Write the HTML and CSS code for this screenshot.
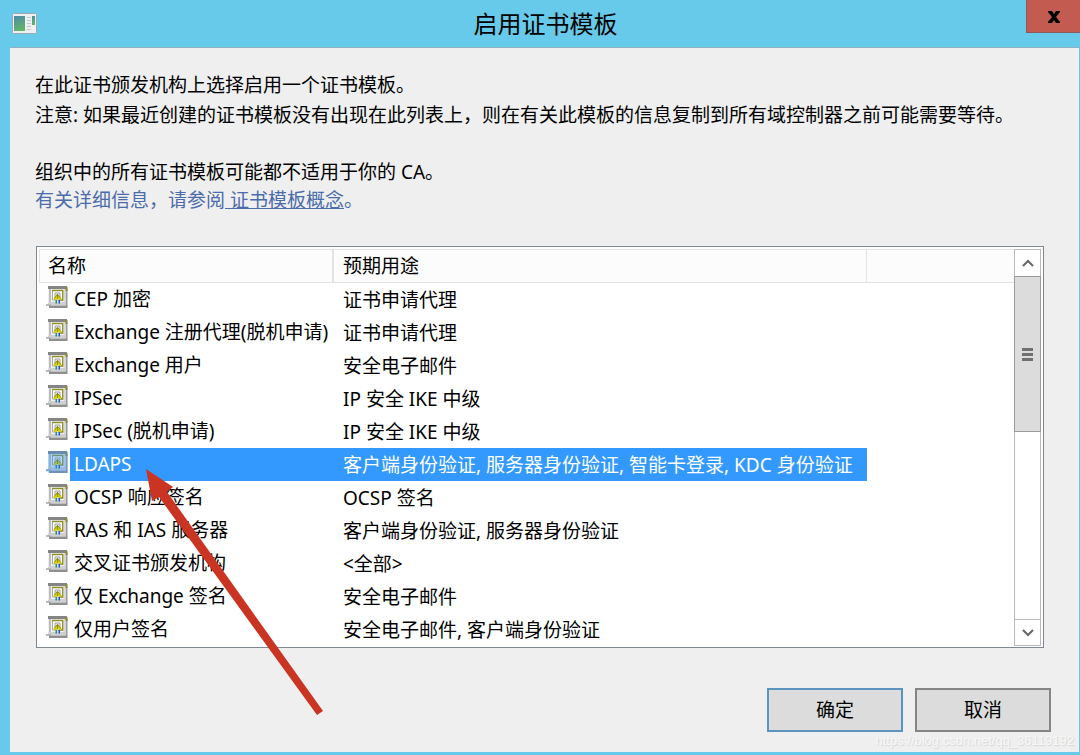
FILE: index.html
```html
<!DOCTYPE html>
<html lang="zh-CN">
<head>
    <meta charset="UTF-8">
    <meta name="viewport" content="width=device-width, initial-scale=1.0">
    <title>启用证书模板</title>
    <link rel="stylesheet" href="styles.css">
</head>
<body>
    <!-- Shared template icon -->
    <svg class="symbols" aria-hidden="true">
        <symbol id="cert" viewBox="0 0 22 22">
            <path d="M2 0h19v20H2z" fill="#f0f0f0"/>
            <path d="M2 0h19v3H2z" fill="#858585"/>
            <path d="M3 3h2v13H3z" fill="#bdbdbd"/>
            <path d="M18 3h2v14h-2z" fill="#d8d8d8"/>
            <path d="M20 3h1.500v17H20z" fill="#9a9a9a"/>
            <path d="M19.500 1h2v4h-2z" fill="#8a8a30"/>
            <path d="M3 16h17v3H1z" fill="#cfcfcf"/>
            <path d="M0 18h5v2H0z" fill="#b8b8b8"/>
            <path d="M3 19.500h18.500V22H3z" fill="#8f8f8f"/>
            <path d="M6.500 4.500h10v9.500h-10z" fill="#fff" stroke="#a9a99a"/>
            <path d="M6 4.500h10.800v9.500H14" fill="none" stroke="#8f8f28" stroke-width="1.300"/>
            <path d="M9 7h5v4H9z" fill="#e9e9e9" stroke="#a0a0a0"/>
            <path d="M11.500 8l3.500 4v2h-2l-1.500-1.500L10 14H8v-2z" fill="#d6d200"/>
            <path d="M11.500 8v5M8 12.500l3.500-4 3.500 4" fill="none" stroke="#808000" stroke-width=".8"/>
            <path d="M9.500 14H11v3.500H9.500z" fill="#1c8c8c"/>
            <path d="M12.500 14H14v3.500h-1.500z" fill="#2848d8"/>
        </symbol>
    </svg>

    <div class="window">
        <header class="titlebar">
            <svg class="app-icon" viewBox="0 0 25 21" aria-hidden="true">
                <defs>
                    <linearGradient id="pane" x1="0" y1="0" x2="0.300" y2="1">
                        <stop offset="0" stop-color="#4d88a8"/>
                        <stop offset="1" stop-color="#62b46c"/>
                    </linearGradient>
                </defs>
                <rect x=".5" y=".5" width="24" height="20" rx="1" fill="#eef0f1" stroke="#9aa9b2"/>
                <rect x="2" y="3" width="11" height="15" fill="url(#pane)"/>
                <path d="M15 4.500h4M15 7.500h4M15 10.500h4M15 13.500h4M15 16.500h4" stroke="#c3c8cb"/>
                <rect x="20" y="3" width="3" height="9" fill="url(#pane)"/>
            </svg>
            <h1>启用证书模板</h1>
            <button type="button" class="close" aria-label="关闭">
                <svg viewBox="0 0 14 12" aria-hidden="true"><path d="M1 0h4l2 3 2-3h4v1L9 6l4 5v1H9L7 9l-2 3H1v-1l4-5-4-5z"/></svg>
            </button>
        </header>

        <main class="dialog">
            <div class="intro">
                <p>在此证书颁发机构上选择启用一个证书模板。</p>
                <p>注意: 如果最近创建的证书模板没有出现在此列表上，则在有关此模板的信息复制到所有域控制器之前可能需要等待。</p>
            </div>
            <div class="more">
                <p>组织中的所有证书模板可能都不适用于你的 CA。</p>
                <p class="hint">有关详细信息，请参阅<a href="#">&nbsp;证书模板概念</a>。</p>
            </div>

            <!-- Template list -->
            <div class="listbox">
                <table class="templates">
                    <colgroup>
                        <col class="col-name">
                        <col class="col-usage">
                        <col>
                    </colgroup>
                    <thead>
                        <tr><th scope="col">名称</th><th scope="col">预期用途</th><td></td></tr>
                    </thead>
                    <tbody>
                        <tr><td><div class="name"><svg class="cert"><use href="#cert"/></svg><span>CEP 加密</span></div></td><td>证书申请代理</td><td></td></tr>
                        <tr><td><div class="name"><svg class="cert"><use href="#cert"/></svg><span>Exchange 注册代理(脱机申请)</span></div></td><td>证书申请代理</td><td></td></tr>
                        <tr><td><div class="name"><svg class="cert"><use href="#cert"/></svg><span>Exchange 用户</span></div></td><td>安全电子邮件</td><td></td></tr>
                        <tr><td><div class="name"><svg class="cert"><use href="#cert"/></svg><span>IPSec</span></div></td><td>IP 安全 IKE 中级</td><td></td></tr>
                        <tr><td><div class="name"><svg class="cert"><use href="#cert"/></svg><span>IPSec (脱机申请)</span></div></td><td>IP 安全 IKE 中级</td><td></td></tr>
                        <tr class="selected"><td><div class="name"><svg class="cert"><use href="#cert"/><path d="M2 0h19.500v22H3l-3-2v-2h2z" fill="#3399ff" fill-opacity=".35"/></svg><span>LDAPS</span></div></td><td>客户端身份验证, 服务器身份验证, 智能卡登录, KDC 身份验证</td><td></td></tr>
                        <tr><td><div class="name"><svg class="cert"><use href="#cert"/></svg><span>OCSP 响应签名</span></div></td><td>OCSP 签名</td><td></td></tr>
                        <tr><td><div class="name"><svg class="cert"><use href="#cert"/></svg><span>RAS 和 IAS 服务器</span></div></td><td>客户端身份验证, 服务器身份验证</td><td></td></tr>
                        <tr><td><div class="name"><svg class="cert"><use href="#cert"/></svg><span>交叉证书颁发机构</span></div></td><td>&lt;全部&gt;</td><td></td></tr>
                        <tr><td><div class="name"><svg class="cert"><use href="#cert"/></svg><span>仅 Exchange 签名</span></div></td><td>安全电子邮件</td><td></td></tr>
                        <tr><td><div class="name"><svg class="cert"><use href="#cert"/></svg><span>仅用户签名</span></div></td><td>安全电子邮件, 客户端身份验证</td><td></td></tr>
                    </tbody>
                </table>
                <div class="scrollbar">
                    <button type="button" aria-label="向上滚动"><svg viewBox="0 0 12 8" aria-hidden="true"><path d="M1 7l5-5 5 5"/></svg></button>
                    <div class="track"><div class="thumb"><i></i><i></i><i></i></div></div>
                    <button type="button" aria-label="向下滚动"><svg viewBox="0 0 12 8" aria-hidden="true"><path d="M1 1l5 5 5-5"/></svg></button>
                </div>
                <!-- Arrow pointing at the LDAPS row -->
                <svg class="pointer" viewBox="0 0 180 248" aria-hidden="true">
                    <path d="M0 0l27 18-6 5 156 219-6 4L13 28l-7 4z" fill="#c93423"/>
                </svg>
            </div>

            <div class="actions">
                <button type="button" class="btn primary">确定</button>
                <button type="button" class="btn">取消</button>
            </div>
            <div class="watermark">https://blog.csdn.net/qq_36119192</div>
        </main>
    </div>
</body>
</html>
```
FILE: styles.css
```css
/* Window frame */
* {
    box-sizing: border-box;
}
body {
    margin: 0;
    background: #67caea;
    color: #000;
    font-family: "Noto Sans", "Noto Sans CJK SC", sans-serif;
    font-size: 19px;
    line-height: 28px;
}
p, h1 {
    margin: 0;
}
button {
    font: inherit;
    color: inherit;
    padding: 0;
}
.symbols {
    display: none;
}
.window {
    min-height: 100vh;
    display: flex;
    flex-direction: column;
    padding: 0 1px 3px 10px;
}
.titlebar {
    display: flex;
    align-items: center;
    height: 47px;
}
.app-icon {
    width: 25px;
    height: 21px;
    margin-left: 2px;
}
.titlebar h1 {
    flex: 1;
    padding-left: 28px;
    font-size: 24px;
    font-weight: normal;
    text-align: center;
}
.close {
    align-self: flex-start;
    width: 54px;
    height: 33px;
    margin-right: -1px;
    background: #c35b51;
    border: 1px solid #8d5a5c;
    border-width: 0 0 1px 1px;
}
.close svg {
    width: 14px;
    height: 12px;
}

/* Dialog text */
.dialog {
    position: relative;
    flex: 1;
    padding: 22px 28px 0 25px;
    background: #efefef;
    border-top: 1px solid #8fb0bd;
}
.intro {
    line-height: 30px;
}
.more {
    margin: 28px 0 32px;
}
.hint, .hint a {
    color: #4b6cab;
}

/* Template list */
.listbox {
    position: relative;
    display: flex;
    margin: 0 7px 0 1px;
    padding: 2px 2px 1px;
    background: #fff;
    border: 1px solid #7f8791;
}
.templates {
    flex: 1;
    table-layout: fixed;
    border-collapse: separate;
    border-spacing: 0;
}
.col-name {
    width: 295px;
}
.col-usage {
    width: 533px;
}
.templates th, .templates td {
    height: 33px;
    padding: 0 0 0 9px;
    text-align: left;
    font-weight: normal;
    white-space: nowrap;
}
.templates thead th, .templates thead td {
    height: 34px;
    background: #fcfcfc;
    border: 1px solid #e3e3e3;
    border-width: 1px 1px 1px 0;
}
.templates thead td {
    border-right: 0;
}
.templates thead th:first-child {
    padding-left: 8px;
    border-width: 1px 2px 1px 1px;
}
.name {
    display: flex;
    align-items: center;
    margin-left: -2px;
}
.name span {
    flex: 1;
    margin-left: 2px;
    padding-left: 4px;
    line-height: 33px;
}
.cert {
    width: 22px;
    height: 22px;
    margin-bottom: 6px;
}
.selected {
    color: #fff;
}
.selected .name span, .selected td:nth-child(2) {
    background: #3399ff;
}

/* Scrollbar */
.scrollbar {
    display: flex;
    flex-direction: column;
    width: 27px;
    border: 1px solid #b9b9b9;
}
.scrollbar button {
    display: flex;
    align-items: center;
    justify-content: center;
    height: 26px;
    background: #fff;
    border: 0;
}
.scrollbar button:last-child {
    border-top: 1px solid #b9b9b9;
}
.scrollbar svg {
    width: 12px;
    height: 8px;
    fill: none;
    stroke: #666;
    stroke-width: 2;
}
.track {
    flex: 1;
}
.thumb {
    display: flex;
    flex-direction: column;
    align-items: center;
    justify-content: center;
    gap: 2px;
    height: 156px;
    margin: 0 -1px;
    background: #dcdcdc;
    border: 1px solid #9b9b9b;
}
.thumb i {
    width: 11px;
    height: 3px;
    background: #707070;
}
.pointer {
    position: absolute;
    left: 109px;
    top: 222px;
    width: 180px;
    height: 248px;
    pointer-events: none;
}

/* Buttons */
.actions {
    display: flex;
    justify-content: flex-end;
    gap: 12px;
    margin-top: 40px;
}
.btn {
    width: 136px;
    height: 44px;
    background: #dcdcdc;
    border: 2px solid #858585;
}
.btn.primary {
    border-color: #5b94bd;
}
.watermark {
    position: absolute;
    right: 5px;
    bottom: 2px;
    color: #f8f8f8;
    font-family: "Liberation Sans", Arial, sans-serif;
    font-size: 13px;
    line-height: 18px;
    text-shadow: 1px 1px 1px #d4d4d4;
}
```
